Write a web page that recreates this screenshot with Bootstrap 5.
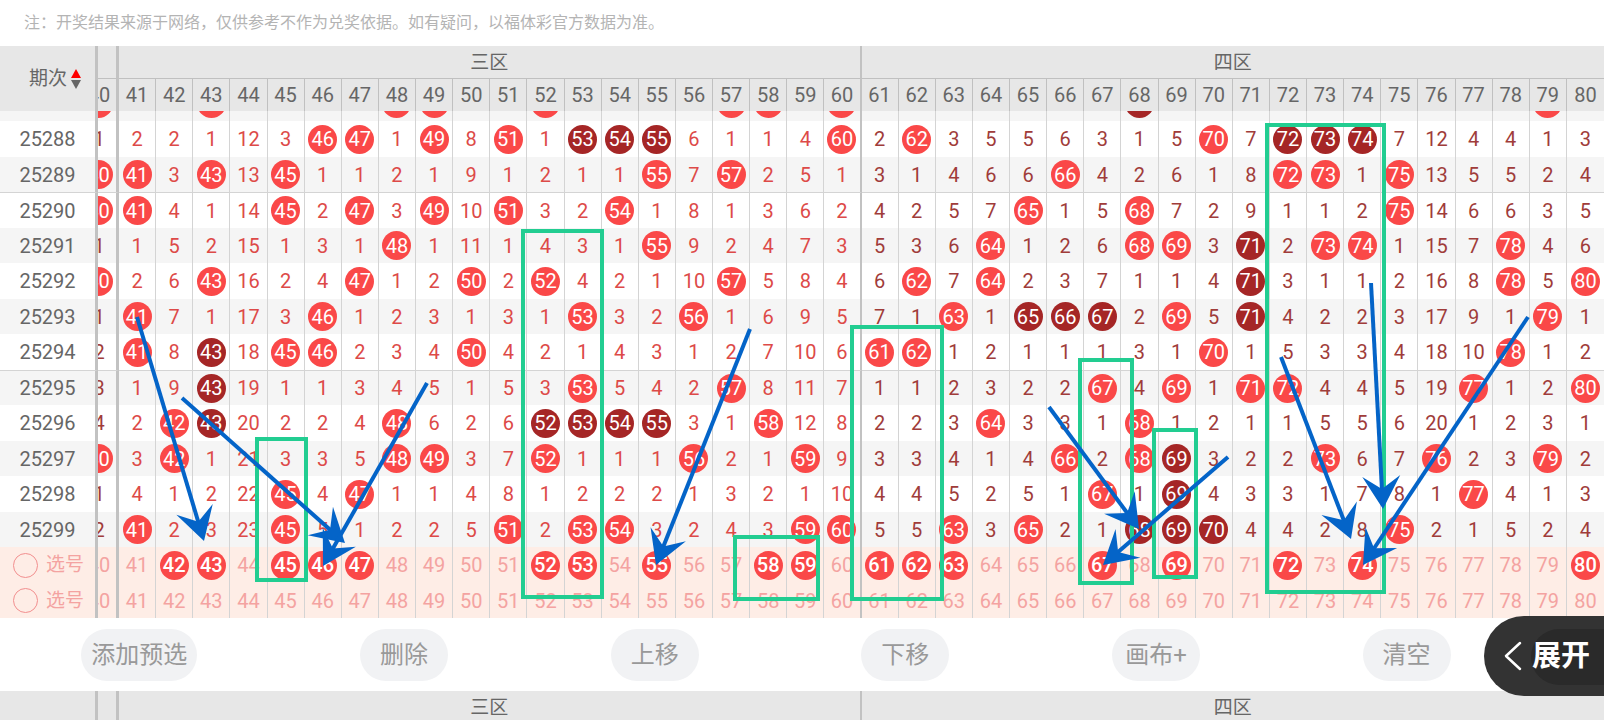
<!DOCTYPE html>
<html lang="zh-CN">
<head>
<meta charset="utf-8">
<meta name="viewport" content="width=device-width, initial-scale=1">
<title>走势图</title>
<link href="https://cdn.jsdelivr.net/npm/bootstrap@5.3.0/dist/css/bootstrap.min.css" rel="stylesheet">
<style>
  body { font-family: Roboto, "Noto Sans CJK SC", sans-serif; font-size: 20px; line-height: 24px; color: #666; background: #fff; }
  .note { height: 46px; font-size: 16px; color: #b4b4b4; }
  .trend { display: block; }
  .trend tbody { display: block; }
  .trend thead, .trend tbody tr { display: grid; grid-template-columns: 98px 21px repeat(40, minmax(0, 1fr)); }
  .trend thead { background: #e7e7e7; grid-template-rows: 33px 32px; }
  .trend thead.repeat-head { grid-template-rows: 33px; }
  .trend thead tr { display: contents; }
  .trend th, .trend td { display: flex; align-items: center; justify-content: center; min-width: 0; font-weight: 400; border-right: 1px solid #d4d4d4; }
  .trend tr > :last-child { border-right: 0; }
  .trend thead th { border-right-color: #c0c0c0; padding-bottom: 2px; }
  .trend thead .zone { border-bottom: 1px solid #c0c0c0; padding-bottom: 0; font-size: 19px; }
  .trend .issue { border-right: 3px solid #c2c2c2; }
  .trend thead .issue { grid-row: span 2; font-size: 19px; gap: 4px; padding: 0 0 0 15px; }
  .trend thead.repeat-head .issue { grid-row: auto; }
  .trend .edge { border-right: 3px solid #c2c2c2; justify-content: end; overflow: hidden; color: #a03c3a; }
  .trend thead .edge { color: inherit; }
  .edge > span { flex: none; width: 32px; text-align: center; }
  .trend .zone-end { border-right: 2px solid #c2c2c2; }
  .trend tbody tr { height: 35px; background: #f5f5f5; }
  .trend tbody tr:nth-child(even) { height: 36px; background: #fff; }
  .trend tbody tr.cut-row { height: 10px; overflow: hidden; }
  .cut-row td { align-items: end !important; padding-bottom: 3px; height: 10px; }
  .trend tbody tr.rule-above > * { border-top: 1px solid #d4d4d4; }
  .zone3 { color: #dd4a48; }
  .zone4 { color: #a03c3a; }
  .ball { flex: none; width: 29px; height: 29px; border-radius: 50%; display: flex; align-items: center; justify-content: center; background: #fa4848; color: #fff; }
  .edge > .ball { width: 29px; margin-right: 2px; }
  .ball.streak { background: #a52626; }
  .trend tbody tr.pick-row, .trend tbody tr.pick-row:nth-child(even) { background: #feede6; }
  .pick-row td, .pick-row th { color: #f4a3a1 !important; }
  .pick-row .ball { font-weight: 500; }
  .pick-row label { font-size: 19px; padding-left: 2px; }
  .pick-row input { appearance: none; width: 25px; height: 25px; margin: 0; border: 1px solid #f28f8f; border-radius: 50%; background: transparent; }
  .pick-row input:checked { background: #fa4848; }
  .tools { height: 73px; padding-right: 72px; }
  .tools .btn { height: 52px; min-width: 88px; padding: 0 10px; border: 0; border-radius: 26px; background: #f1f2f4; color: #999; font-size: 24px; line-height: 24px; white-space: nowrap; }
  .expand { position: fixed; right: 0; bottom: 24px; width: 120px; height: 80px; padding: 0 14px 0 20px; border: 0; border-radius: 40px 0 0 40px; background: #333; color: #fff; font-size: 29px; line-height: 32px; font-weight: 700; isolation: isolate; }
  .expand::before { content: ""; position: absolute; z-index: -1; inset: 13px 0 11px 47px; border-radius: 28px 0 0 28px; background: #2a2a2a; }
</style>
</head>
<body class="vh-100 overflow-hidden">
<p class="note d-flex align-items-center px-4 m-0">注：开奖结果来源于网络，仅供参考不作为兑奖依据。如有疑问，以福体彩官方数据为准。</p>

<main>
  <div class="position-relative">
    <table class="trend">
      <thead>
        <tr>
          <th class="issue" rowspan="2" scope="col">期次
            <svg width="10" height="20" viewBox="0 0 10 20" aria-hidden="true"><path d="M5 0l5 9H0z" fill="#f00"/><path d="M0 11h10l-5 9z" fill="#666"/></svg>
          </th>
          <th class="zone edge"></th>
          <th class="zone zone-end" colspan="20" style="grid-column: span 20">三区</th>
          <th class="zone" colspan="20" style="grid-column: span 20">四区</th>
        </tr>
        <tr id="numbers"></tr>
      </thead>
      <tbody id="draws"></tbody>
    </table>
    <svg id="marks" class="position-absolute top-0 start-0 w-100 h-100 pe-none" viewBox="0 46 1604 572" preserveAspectRatio="none" aria-hidden="true"></svg>
  </div>

  <div class="tools d-flex align-items-center justify-content-around">
    <button type="button" class="btn">添加预选</button>
    <button type="button" class="btn">删除</button>
    <button type="button" class="btn">上移</button>
    <button type="button" class="btn">下移</button>
    <button type="button" class="btn">画布+</button>
    <button type="button" class="btn">清空</button>
  </div>

  <table class="trend">
    <thead class="repeat-head">
      <tr>
        <th class="issue"></th>
        <th class="zone edge"></th>
        <th class="zone zone-end" colspan="20" style="grid-column: span 20">三区</th>
        <th class="zone" colspan="20" style="grid-column: span 20">四区</th>
      </tr>
    </thead>
  </table>
</main>

<button type="button" class="expand d-flex align-items-center justify-content-between">
  <svg width="18" height="30" viewBox="0 0 18 30" fill="none" stroke="#fff" stroke-width="2.5" stroke-linecap="round" stroke-linejoin="round" aria-hidden="true"><path d="M16 2L2 15l14 13"/></svg>
  展开
</button>

<script src="https://cdn.jsdelivr.net/npm/bootstrap@5.3.0/dist/js/bootstrap.bundle.min.js"></script>
<script>
  // One token per column 40..80: o = drawn number, x = number in a streak, otherwise the gap count
  const draws = [
    ['25288', '1 2 2 1 12 3 o o 1 o 8 o 1 x x x 6 1 1 4 o 2 o 3 5 5 6 3 1 5 o 7 x x x 7 12 4 4 1 3'],
    ['25289', 'o o 3 o 13 o 1 1 2 1 9 1 2 1 1 o 7 o 2 5 1 3 1 4 6 6 o 4 2 6 1 8 o o 1 o 13 5 5 2 4'],
    ['25290', 'o o 4 1 14 o 2 o 3 o 10 o 3 2 o 1 8 1 3 6 2 4 2 5 7 o 1 5 o 7 2 9 1 1 2 o 14 6 6 3 5'],
    ['25291', '1 1 5 2 15 1 3 1 o 1 11 1 4 3 1 o 9 2 4 7 3 5 3 6 o 1 2 6 o o 3 x 2 o o 1 15 7 o 4 6'],
    ['25292', 'o 2 6 o 16 2 4 o 1 2 o 2 o 4 2 1 10 o 5 8 4 6 o 7 o 2 3 7 1 1 4 x 3 1 1 2 16 8 o 5 o'],
    ['25293', '1 o 7 1 17 3 o 1 2 3 1 3 1 o 3 2 o 1 6 9 5 7 1 o 1 x x x 2 o 5 x 4 2 2 3 17 9 1 o 1'],
    ['25294', '2 o 8 x 18 o o 2 3 4 o 4 2 1 4 3 1 2 7 10 6 o o 1 2 1 1 1 3 1 o 1 5 3 3 4 18 10 o 1 2'],
    ['25295', '3 1 9 x 19 1 1 3 4 5 1 5 3 o 5 4 2 o 8 11 7 1 1 2 3 2 2 o 4 o 1 o o 4 4 5 19 o 1 2 o'],
    ['25296', '4 2 o x 20 2 2 4 o 6 2 6 x x x x 3 1 o 12 8 2 2 3 o 3 3 1 o 1 2 1 1 5 5 6 20 1 2 3 1'],
    ['25297', 'o 3 o 1 21 3 3 5 o o 3 7 o 1 1 1 o 2 1 o 9 3 3 4 1 4 o 2 o x 3 2 2 o 6 7 o 2 3 o 2'],
    ['25298', '1 4 1 2 22 o 4 o 1 1 4 8 1 2 2 2 1 3 2 1 10 4 4 5 2 5 1 o 1 x 4 3 3 1 7 8 1 o 4 1 3'],
    ['25299', '2 o 2 3 23 o 5 1 2 2 5 o 2 o o 3 2 4 3 o o 5 5 o 3 o 2 1 x x x 4 4 2 8 o 2 1 5 2 4']
  ];
  const columns = Array.from({ length: 41 }, (_, i) => 40 + i);
  const cellClass = n => n === 40 ? 'edge' : (n <= 60 ? 'zone3' : 'zone4') + (n === 60 ? ' zone-end' : '');
  const content = (token, n, label = n) => token === 'o' || token === 'x'
    ? `<span class="ball${token === 'x' ? ' streak' : ''}">${label}</span>` : `<span>${token}</span>`;
  const cells = fn => columns.map(n => `<td class="${cellClass(n)}">${fn(n)}</td>`).join('');

  document.getElementById('numbers').innerHTML = columns.map(n =>
    `<th scope="col" class="${n === 40 ? 'edge' : n === 60 ? 'zone-end' : ''}"><span>${n}</span></th>`).join('');

  const cut = [40, 43, 48, 49, 52, 57, 58, 60, 68, 79];
  let rows = `<tr class="cut-row"><th class="issue"></th>${cells(n =>
    cut.includes(n) ? content(n === 68 ? 'x' : 'o', n, '') : '')}</tr>`;
  draws.forEach(([issue, line], i) => {
    const tokens = line.split(' ');
    rows += `<tr class="${i % 5 === 2 ? 'rule-above' : ''}"><th scope="row" class="issue">${issue}</th>${cells(n => content(tokens[n - 40], n))}</tr>`;
  });
  const picks = [[42, 43, 45, 46, 47, 52, 53, 55, 58, 59, 61, 62, 63, 67, 69, 72, 74, 80], []];
  picks.forEach((set, i) => {
    rows += `<tr class="pick-row"><th scope="row" class="issue"><label class="d-flex align-items-center gap-2" for="pick${i}"><input type="radio" name="pick" id="pick${i}">选号</label></th>${cells(n => content(set.includes(n) ? 'o' : n, n))}</tr>`;
  });
  document.getElementById('draws').innerHTML = rows;

  // Hand-drawn marks on the chart: boxes are left, top, right, bottom; arrows are start and tip
  const boxes = [[257, 439, 306, 580], [523, 231, 602, 597], [735, 537, 818, 599], [852, 327, 942, 599],
    [1080, 360, 1132, 583], [1154, 430, 1196, 577], [1267, 125, 1384, 592]];
  const arrows = [[137, 317, 204, 541], [182, 398, 345, 543], [427, 383, 323, 566], [750, 329, 656, 565],
    [1049, 407, 1139, 529], [1228, 457, 1103, 565], [1281, 357, 1351, 539], [1371, 283, 1383, 509], [1528, 317, 1363, 565]];
  document.getElementById('marks').innerHTML =
    boxes.map(([l, t, r, b]) => `<rect x="${l}" y="${t}" width="${r - l}" height="${b - t}" fill="none" stroke="#22cd91" stroke-width="4"/>`).join('') +
    arrows.map(([x1, y1, x2, y2]) => {
      const len = Math.hypot(x2 - x1, y2 - y1), turn = Math.atan2(y2 - y1, x2 - x1) * 180 / Math.PI;
      return `<g transform="translate(${x2} ${y2}) rotate(${turn})" fill="#0464c8"><path d="M${-len} -2H-18V2H${-len}z"/><path d="M0 0L-33 19L-20 0L-33 -19z"/></g>`;
    }).join('');
</script>
</body>
</html>
